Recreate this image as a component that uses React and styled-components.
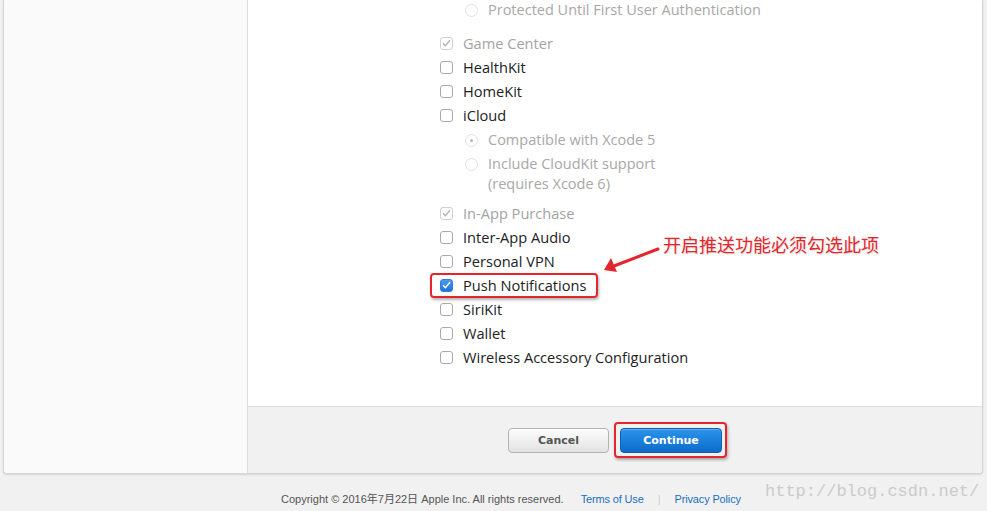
import styled, { createGlobalStyle } from "styled-components";

const GlobalStyle = createGlobalStyle`
  html, body {
    margin: 0;
    padding: 0;
    background: #f1f1f1;
  }
  body {
    font-family: "Open Sans", "DejaVu Sans", sans-serif;
    overflow: hidden;
  }
`;

const Page = styled.div`
  position: relative;
  width: 987px;
  height: 511px;
  overflow: hidden;
`;

const Card = styled.div`
  display: flex;
  margin: 0 4px 0 3px;
  border: 1px solid #d4d4d4;
  border-top: none;
  border-radius: 0 0 4px 4px;
  background: #fff;
  box-shadow: 0 1px 2px rgba(0, 0, 0, 0.12);
  overflow: hidden;
`;

const Sidebar = styled.aside`
  width: 243px;
  background: #fafafa;
  border-right: 1px solid #dcdcdc;
`;

const Main = styled.main`
  position: relative;
  flex: 1;
  display: flex;
  flex-direction: column;
`;

const Options = styled.div`
  padding: 0 0 37px 192px;
`;

const SubGroup = styled.div`
  padding: ${(p) => p.$before || 0}px 0 0 25px;
  margin-bottom: ${(p) => p.$after}px;
`;

const Row = styled.div`
  position: relative;
  display: flex;
  align-items: center;
  height: 24px;
  gap: 10px;
  font-size: 14.6px;
  color: ${(p) => (p.$disabled ? "#a3a3a3" : "#222")};
`;

const SubRow = styled.div`
  display: flex;
  align-items: flex-start;
  gap: 10px;
  padding: ${(p) => (p.$first ? "0 0 2px" : "2px 0")};
  font-size: 14.5px;
  line-height: 20px;
  color: #a8a8a8;
`;

const Box = styled.span`
  flex: none;
  box-sizing: border-box;
  width: 13px;
  height: 13px;
  border-radius: 3px;
  border: 1px solid ${(p) => (p.$checked ? "#2a7de1" : p.$disabled ? "#d0d0d0" : "#a9a9a9")};
  background: ${(p) => (p.$checked ? "linear-gradient(#4b9bf2, #1f72e0)" : "#fff")};
  display: flex;
  align-items: center;
  justify-content: center;
`;

const Radio = styled.span`
  flex: none;
  box-sizing: border-box;
  width: 13px;
  height: 13px;
  margin-top: 4px;
  border-radius: 50%;
  border: 1px solid #e0e0e0;
  background: #fff;
  display: flex;
  align-items: center;
  justify-content: center;
  &::after {
    content: "";
    display: ${(p) => (p.$on ? "block" : "none")};
    width: 3px;
    height: 3px;
    border-radius: 50%;
    background: #b8b8b8;
  }
`;

const Highlight = styled.span`
  position: absolute;
  box-sizing: border-box;
  border: 2px solid #e3262c;
  border-radius: 4px;
  box-shadow: 1px 2px 3px rgba(0, 0, 0, 0.3);
  pointer-events: none;
`;

const RowHighlight = styled(Highlight)`
  left: -10px;
  top: 0;
  width: 168px;
  height: 25px;
`;

const Note = styled.div`
  position: absolute;
  left: 415px;
  top: 231px;
  font-family: "Noto Sans CJK SC", sans-serif;
  font-size: 18px;
  line-height: 26px;
  color: #e3262c;
  text-shadow: 1px 1px 1px rgba(0, 0, 0, 0.15);
`;

const Arrow = styled.svg`
  position: absolute;
  left: 352px;
  top: 239px;
`;

const Actions = styled.div`
  height: 66px;
  border-top: 1px solid #dedede;
  background: #f1f1f1;
  display: flex;
  align-items: center;
  justify-content: center;
  gap: 11px;
`;

const ButtonWrap = styled.span`
  position: relative;
  display: inline-flex;
`;

const Button = styled.button`
  box-sizing: border-box;
  width: ${(p) => (p.$primary ? 102 : 101)}px;
  height: 25px;
  border-radius: 4px;
  font-family: "DejaVu Sans", sans-serif;
  font-size: 11px;
  font-weight: bold;
  cursor: pointer;
  border: 1px solid ${(p) => (p.$primary ? "#0b5fb4" : "#b3b3b3")};
  color: ${(p) => (p.$primary ? "#fff" : "#555")};
  background: ${(p) =>
    p.$primary
      ? "linear-gradient(#2b95ea, #0c6bcb)"
      : "linear-gradient(#fdfdfd, #e2e2e2)"};
  box-shadow: ${(p) =>
    p.$primary ? "inset 0 1px 0 rgba(255,255,255,0.25)" : "inset 0 1px 0 #fff"};
`;

const ButtonHighlight = styled(Highlight)`
  left: -6px;
  top: -6px;
  right: -5px;
  bottom: -5px;
`;

const Footer = styled.footer`
  display: flex;
  align-items: center;
  padding: 18px 0 0 281px;
  font-family: "Liberation Sans", "Noto Sans CJK SC", sans-serif;
  font-size: 11px;
  line-height: 14px;
  color: #555;
`;

const FooterLink = styled.a`
  color: #1a6fbf;
  text-decoration: none;
  letter-spacing: -0.15px;
  margin-left: ${(p) => p.$gap || 0}px;
`;

const Divider = styled.span`
  margin: 0 14px;
  color: #ccc;
`;

const Watermark = styled.div`
  position: absolute;
  left: 765px;
  top: 482px;
  font-family: "Liberation Mono", monospace;
  font-size: 17px;
  color: #cbcbcb;
`;

const Check = ({ color }) => (
  <svg width="9" height="8" viewBox="0 0 9 8">
    <path d="M1 4.2 L3.4 6.6 L8 1.2" fill="none" stroke={color} strokeWidth="1.4" />
  </svg>
);

const CheckRow = ({ label, checked, disabled, children }) => (
  <Row $disabled={disabled}>
    <Box $checked={checked} $disabled={disabled}>
      {checked && <Check color="#fff" />}
      {disabled && <Check color="#b5b5b5" />}
    </Box>
    {label}
    {children}
  </Row>
);

const App = () => {
  return (
    <Page>
      <GlobalStyle />
      <Card>
        <Sidebar />
        <Main>
          <Options>
            <SubGroup $after={9}>
              <SubRow $first>
                <Radio />
                <span>Protected Until First User Authentication</span>
              </SubRow>
            </SubGroup>
            <CheckRow label="Game Center" disabled />
            <CheckRow label="HealthKit" />
            <CheckRow label="HomeKit" />
            <CheckRow label="iCloud" />
            <SubGroup $before={1} $after={5}>
              <SubRow>
                <Radio $on />
                <span>Compatible with Xcode 5</span>
              </SubRow>
              <SubRow>
                <Radio />
                <span>
                  Include CloudKit support
                  <br />
                  (requires Xcode 6)
                </span>
              </SubRow>
            </SubGroup>
            <CheckRow label="In-App Purchase" disabled />
            <CheckRow label="Inter-App Audio" />
            <CheckRow label="Personal VPN" />
            <CheckRow label="Push Notifications" checked>
              <RowHighlight />
            </CheckRow>
            <CheckRow label="SiriKit" />
            <CheckRow label="Wallet" />
            <CheckRow label="Wireless Accessory Configuration" />
          </Options>
          <Arrow width="64" height="36" viewBox="0 0 64 36">
            <path d="M58 10 L14 27" stroke="#e3262c" strokeWidth="3" strokeLinecap="round" />
            <path d="M4 31 L11 19 L17 33 Z" fill="#e3262c" />
          </Arrow>
          <Note>开启推送功能必须勾选此项</Note>
          <Actions>
            <Button>Cancel</Button>
            <ButtonWrap>
              <Button $primary>Continue</Button>
              <ButtonHighlight />
            </ButtonWrap>
          </Actions>
        </Main>
      </Card>
      <Footer>
        Copyright © 2016年7月22日 Apple Inc. All rights reserved.
        <FooterLink $gap={17}>Terms of Use</FooterLink>
        <Divider>|</Divider>
        <FooterLink>Privacy Policy</FooterLink>
      </Footer>
      <Watermark>http://blog.csdn.net/</Watermark>
    </Page>
  );
};

export default App;
